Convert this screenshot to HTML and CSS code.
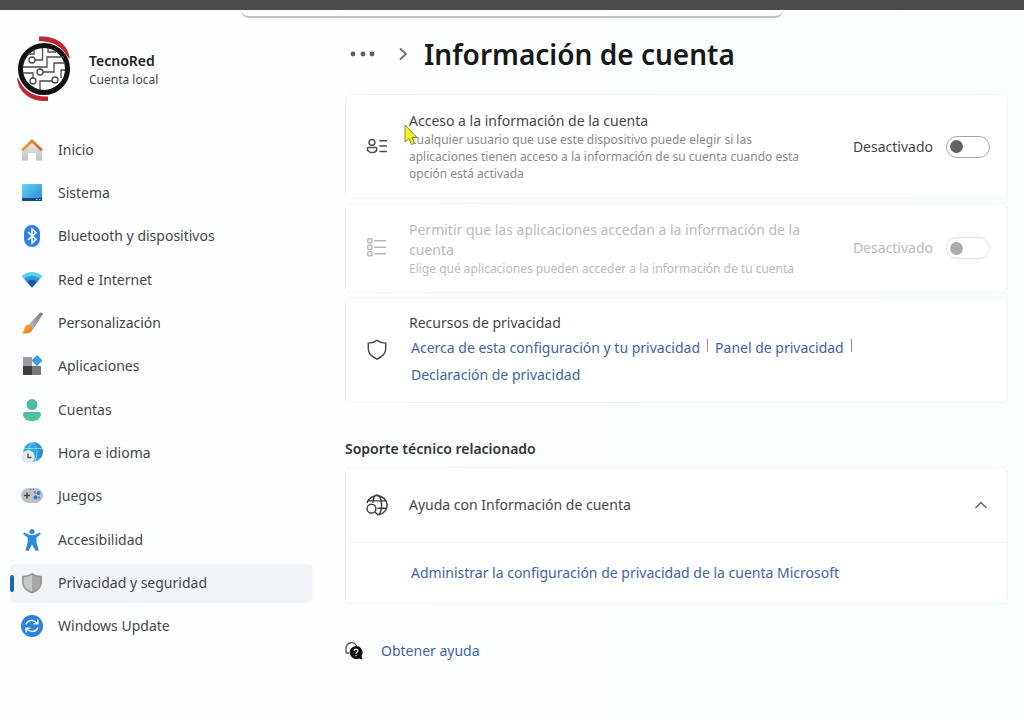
FILE: index.html
```html
<!DOCTYPE html>
<html lang="es">
<head>
    <meta charset="UTF-8">
    <meta name="viewport" content="width=device-width, initial-scale=1.0">
    <title>Información de cuenta</title>
    <link rel="stylesheet" href="styles.css">
</head>
<body>
    <div class="top-bar"><div class="top-tab"></div></div>
    <div class="layout">
        <aside class="sidebar">
            <div class="profile">
                <svg class="avatar" width="56" height="66" viewBox="0 0 56 66">
                    <path d="M23 0.500C40 0 52 8 54 23L51 20C46 11 38 5.500 23 5Z" fill="#bf2730"/>
                    <path d="M32 65C15 66 2 57 1 41L4 46C9 55 17 61 32 60.500Z" fill="#bf2730"/>
                    <circle cx="28" cy="33" r="23.5" fill="#fff" stroke="#111312" stroke-width="5"/>
                    <g fill="none" stroke="#4b4b4b" stroke-width="1.3">
                        <path d="M18.500 24h8V12M7 31h24V21h17M24 36h14v-9h11M7 37h10v5M24 54v-9h12M49 34h-4v8M12 18h6v-5M32 12v4h8"/>
                        <circle cx="16" cy="24" r="3" fill="#fff"/>
                        <circle cx="24" cy="36" r="3" fill="#fff"/>
                        <circle cx="17" cy="45" r="3" fill="#fff"/>
                        <circle cx="39" cy="44" r="3" fill="#fff"/>
                    </g>
                </svg>
                <div>
                    <div class="profile-name">TecnoRed</div>
                    <div class="profile-type">Cuenta local</div>
                </div>
            </div>

            <nav class="menu">
                <a href="#">
                    <svg viewBox="0 0 22 22">
                        <defs>
                            <linearGradient id="wall" x2="0" y2="1"><stop stop-color="#f0f0f0"/><stop offset="1" stop-color="#bfc0c2"/></linearGradient>
                            <linearGradient id="roof"><stop stop-color="#f0a03a"/><stop offset="1" stop-color="#cf6a2b"/></linearGradient>
                        </defs>
                        <path d="M1 10L11 2l10 8v11.5h-6V14H7v7.5H1z" fill="url(#wall)"/>
                        <path d="M1 11.5L11 2l10 9.5" fill="none" stroke="url(#roof)" stroke-width="2.8"/>
                    </svg>
                    Inicio
                </a>
                <a href="#">
                    <svg viewBox="0 0 22 22">
                        <defs><linearGradient id="screen" x2="1" y2="1"><stop stop-color="#62d8f4"/><stop offset="1" stop-color="#2b83d2"/></linearGradient></defs>
                        <rect x="1" y="2" width="20" height="17" rx="1" fill="url(#screen)"/>
                        <path d="M1 16h20v2a1 1 0 0 1-1 1H2a1 1 0 0 1-1-1z" fill="#174a7c"/>
                        <path d="M15 17.5h1.5M18 17.5h1.5" stroke="#8fc8ec"/>
                    </svg>
                    Sistema
                </a>
                <a href="#">
                    <svg viewBox="0 0 22 22">
                        <rect x="3" y="0" width="16" height="22" rx="8" fill="#2f80ea"/>
                        <path d="M7 7l8 7.5-4 3.5V4l4 3.500L7 15" fill="none" stroke="#fff" stroke-width="1.5"/>
                    </svg>
                    Bluetooth y dispositivos
                </a>
                <a href="#">
                    <svg viewBox="0 0 22 22">
                        <path d="M0.5 7Q11-1 21.5 7L11 18.5z" fill="#5fd0f5"/>
                        <path d="M3 9.800Q11 3.500 19 9.800L11 18.500z" fill="#2f98dd"/>
                        <path d="M6 13Q11 8.500 16 13L11 18.500z" fill="#1c58a8"/>
                    </svg>
                    Red e Internet
                </a>
                <a href="#">
                    <svg viewBox="0 0 22 22">
                        <defs>
                            <linearGradient id="handle" x1="1" x2="0" y2="1"><stop stop-color="#777b80"/><stop offset="1" stop-color="#b9bcc0"/></linearGradient>
                            <linearGradient id="brush" x2="1" y2="1"><stop stop-color="#ffb53b"/><stop offset="1" stop-color="#e0701c"/></linearGradient>
                        </defs>
                        <path d="M19 0.800q2.500-1 2.700 1.500L12.500 17l-5-4z" fill="url(#handle)"/>
                        <path d="M7.500 12.500l4.500 3.500c0 4.500-6 6.500-11.500 5 2.500-1 2.300-2.500 3-5 .7-2 2.200-3.500 4-3.500z" fill="url(#brush)"/>
                    </svg>
                    Personalización
                </a>
                <a href="#">
                    <svg viewBox="0 0 22 22">
                        <rect x="2" y="2" width="9" height="9" fill="#9a9da1"/>
                        <rect x="2" y="11" width="9" height="9" fill="#3c3e42"/>
                        <rect x="11" y="11" width="9" height="9" fill="#75787d"/>
                        <path d="M16 0l5.5 5.5L16 11l-5.5-5.5z" fill="#3b9cec"/>
                    </svg>
                    Aplicaciones
                </a>
                <a href="#">
                    <svg viewBox="0 0 22 22">
                        <circle cx="11" cy="5.5" r="5.5" fill="#52bca3"/>
                        <path d="M4 13h14a2 2 0 0 1 2 2c0 4.500-4 7-9 7s-9-2.500-9-7a2 2 0 0 1 2-2z" fill="#4fc0a5"/>
                    </svg>
                    Cuentas
                </a>
                <a href="#">
                    <svg viewBox="0 0 22 22">
                        <circle cx="12" cy="10" r="9.8" fill="#2eaadb"/>
                        <path d="M12 0.2a9.800 9.800 0 0 1 8 15.500q-6 1-6-6T12 0.200z" fill="#2a8fd0"/>
                        <path d="M3 6.500h18M12 0.200q-6 5-4 12M12 0.200q7 8 2 19" stroke="#8be0f2" stroke-width=".8" fill="none"/>
                        <circle cx="7" cy="15" r="6.8" fill="#e6e8ea"/>
                        <path d="M7 11.500v4h3.500" fill="none" stroke="#505459" stroke-width="1.4"/>
                    </svg>
                    Hora e idioma
                </a>
                <a href="#">
                    <svg viewBox="0 0 22 22">
                        <rect x="0" y="3" width="22" height="15" rx="7.5" fill="#bcc0c7"/>
                        <path d="M3 10.500h6M6 7.500v6" stroke="#494c52" stroke-width="1.6"/>
                        <path d="M9 4.500h1M12 4.500h1" stroke="#62666c"/>
                        <circle cx="17.5" cy="8" r="2" fill="#2d7dd2"/>
                        <circle cx="14.5" cy="12.5" r="2" fill="#2d7dd2"/>
                        <circle cx="14" cy="7.5" r="1.2" fill="#8a9098"/>
                        <circle cx="18" cy="12.5" r="1.2" fill="#8a9098"/>
                    </svg>
                    Juegos
                </a>
                <a href="#">
                    <svg viewBox="0 0 22 22">
                        <circle cx="11" cy="2.5" r="2.5" fill="#2887dc"/>
                        <path d="M3 3.500l5.500 2.500h5L19 3.500l.8 1.800-4.300 3.200V13l2.200 8.500-2.900.5L11 15.500l-3.600 6.500-2.900-.5L6.700 13V8.500l-4.500-3.200z" fill="#2b8be0"/>
                    </svg>
                    Accesibilidad
                </a>
                <a href="#" class="active">
                    <svg viewBox="0 0 22 22">
                        <path d="M11 1q4.500 3 10 3v6c0 6-4.500 9.500-10 11.500C5.500 19.500 1 16 1 10V4q5.500 0 10-3z" fill="#96999b"/>
                        <path d="M11 3q4 2.200 8.300 2.500V10c0 4.800-3.500 7.800-8.300 9.600z" fill="#a6a8a9"/>
                        <path d="M11 3q-4 2.200-8.300 2.500V10c0 4.800 3.500 7.800 8.300 9.600z" fill="#c6c8c9"/>
                    </svg>
                    Privacidad y seguridad
                </a>
                <a href="#">
                    <svg viewBox="0 0 22 22">
                        <circle cx="11" cy="11" r="11" fill="#2c82da"/>
                        <path d="M5 9.500q1.500-4 6-4 3 0 5.500 3M17 12.500q-1.500 4-6 4-3 0-5.500-3M16.800 4.500v4.200h-4.200M5.200 17.500v-4.200h4.200" fill="none" stroke="#e4f3ff" stroke-width="1.6"/>
                    </svg>
                    Windows Update
                </a>
            </nav>
        </aside>

        <main class="content">
            <header class="page-header">
                <button type="button" class="more-btn" aria-label="Más">
                    <svg width="26" height="6" viewBox="0 0 26 6" fill="#5b5d5f"><circle cx="3" cy="3" r="2.4"/><circle cx="13" cy="3" r="2.4"/><circle cx="22" cy="3" r="2.4"/></svg>
                </button>
                <svg class="crumb" width="8" height="14" viewBox="0 0 8 14" fill="none" stroke="#66696b" stroke-width="1.7"><path d="M1 1.500L7 7l-6 5.500"/></svg>
                <h1>Información de cuenta</h1>
            </header>

            <section class="card access-card">
                <svg class="card-icon" viewBox="0 0 24 24" fill="none" stroke="#4d4f50" stroke-width="1.6">
                    <circle cx="6.5" cy="7" r="3.2"/>
                    <path d="M2.500 12.500h8.300a1 1 0 0 1 1 1c0 3-2.300 4.500-5.100 4.500s-5.200-1.500-5.200-4.500a1 1 0 0 1 1-1zM14.500 5.200h8.500M14.500 11h8.500M14.500 17h8.500"/>
                </svg>
                <div class="card-text">
                    <label for="account-access">Acceso a la información de la cuenta</label>
                    <p>Cualquier usuario que use este dispositivo puede elegir si las aplicaciones tienen acceso a la información de su cuenta cuando esta opción está activada</p>
                    <svg class="pointer" width="14" height="22" viewBox="0 0 14 22"><path d="M1 1v17l4-3.500 2.500 6 3-1.200L8 13.500h5z" fill="#f7f22c" stroke="#8d8b35"/></svg>
                </div>
                <span class="state">Desactivado</span>
                <input type="checkbox" class="toggle" id="account-access">
            </section>

            <section class="card apps-card disabled">
                <svg class="card-icon" viewBox="0 0 24 24" fill="none" stroke="#b4b6b7" stroke-width="1.6">
                    <rect x="2" y="2" width="4.5" height="4.5" rx="1"/>
                    <rect x="2" y="9" width="4.500" height="4.500" rx="1"/>
                    <rect x="2" y="16" width="4.500" height="4.500" rx="1"/>
                    <path d="M9 4.200h13M9 11.200h13M9 18.200h13"/>
                </svg>
                <div class="card-text">
                    <label for="apps-access">Permitir que las aplicaciones accedan a la información de la cuenta</label>
                    <p>Elige qué aplicaciones pueden acceder a la información de tu cuenta</p>
                </div>
                <span class="state">Desactivado</span>
                <input type="checkbox" class="toggle" id="apps-access" disabled>
            </section>

            <section class="card resources-card">
                <svg class="card-icon" viewBox="0 0 24 24" fill="none" stroke="#454748" stroke-width="1.6">
                    <path d="M12 1.500q4 3 9.500 3v6.500c0 5.500-4 8.500-9.500 11-5.500-2.500-9.500-5.500-9.500-11V4.500Q8 4.500 12 1.500z"/>
                </svg>
                <div class="card-text">
                    <h2>Recursos de privacidad</h2>
                    <div class="links">
                        <a href="#">Acerca de esta configuración y tu privacidad</a>
                        <span class="separator"></span>
                        <a href="#">Panel de privacidad</a>
                        <span class="separator"></span>
                        <a href="#">Declaración de privacidad</a>
                    </div>
                </div>
            </section>

            <h2 class="section-title">Soporte técnico relacionado</h2>

            <section class="help">
                <button type="button" class="help-toggle" aria-expanded="true">
                    <svg class="card-icon" viewBox="0 0 24 24" fill="none" stroke="#3f4142" stroke-width="1.6">
                        <path d="M1.200 10A11 10.500 0 1 1 14.500 22.500M2.500 7.500h19.500M12.500 15.500h9.500M7.500 9.500C8 4.500 9.500 1.200 12 1.200s5 4 5 10.500-2 11-4 11"/>
                        <circle cx="6" cy="16" r="4.8"/>
                        <path d="M9.500 19.500l4 3.500"/>
                    </svg>
                    <span>Ayuda con Información de cuenta</span>
                    <svg class="chevron" width="14" height="8" viewBox="0 0 14 8" fill="none" stroke="#606364" stroke-width="1.4"><path d="M1.500 7L7 1.500 12.500 7"/></svg>
                </button>
                <div class="help-body">
                    <a href="#">Administrar la configuración de privacidad de la cuenta Microsoft</a>
                </div>
            </section>

            <div class="get-help">
                <svg width="18" height="18" viewBox="0 0 18 18">
                    <path d="M1 11V7a5.500 5.500 0 0 1 11-1.500M1 11h3" fill="none" stroke="#555" stroke-width="1.3"/>
                    <path d="M11 4a6.500 6.500 0 0 1 5.500 10l1 3.500-3.800-1A6.500 6.500 0 1 1 11 4z" fill="#0d0e0e"/>
                    <path d="M9 8.800q.3-1.600 2-1.600t2 1.500q0 1-1 1.500t-1 1.500M11 13v1.200" fill="none" stroke="#fff" stroke-width="1.200"/>
                </svg>
                <a href="#">Obtener ayuda</a>
            </div>
        </main>
    </div>
</body>
</html>
```
FILE: styles.css
```css
* {
    box-sizing: border-box;
}
body {
    margin: 0;
    min-height: 100vh;
    font-family: "Noto Sans", "Open Sans", sans-serif;
    font-size: 14px;
    line-height: 20px;
    color: #454647;
    background: linear-gradient(90deg, #fdfefe 30%, #f9fefe 100%);
}
h1, h2, p {
    margin: 0;
}
a {
    color: #3e65a5;
    text-decoration: none;
}
a:hover {
    text-decoration: underline;
}
button {
    padding: 0;
    border: none;
    background: none;
    font: inherit;
    color: inherit;
    cursor: pointer;
}
.top-bar {
    height: 18px;
    border-top: 10px solid #4a4b4a;
}
.top-tab {
    width: 53%;
    height: 8px;
    margin: 0 auto;
    border-bottom: 2px solid #bfc1c1;
    border-radius: 0 0 10px 10px;
}
.layout {
    display: grid;
    grid-template-columns: 303px 1fr;
    gap: 32px;
    padding: 0 16px 0 10px;
}

/* sidebar */
.profile {
    display: flex;
    align-items: center;
    gap: 17px;
    height: 66px;
    margin: 18px 0 28px 6px;
}
.profile-name {
    line-height: 20px;
    font-weight: 600;
    color: #1f2021;
}
.profile-type {
    font-size: 12px;
    line-height: 17px;
}
.menu {
    display: flex;
    flex-direction: column;
    justify-content: space-between;
    height: 516px;
}
.menu a {
    position: relative;
    display: flex;
    align-items: center;
    gap: 15px;
    height: 39px;
    padding-left: 11px;
    border-radius: 5px;
    color: #454647;
}
.menu a:hover {
    text-decoration: none;
    background-color: #f5f7fa;
}
.menu svg {
    width: 22px;
    height: 22px;
}
.menu .active {
    background-color: #f2f5f8;
}
.menu .active::before {
    content: "";
    position: absolute;
    left: 0;
    width: 4px;
    height: 17px;
    border-radius: 2px;
    background-color: #1f63c4;
}

/* content */
.page-header {
    display: flex;
    align-items: center;
    height: 40px;
    margin: 16px 0 20px;
    padding-left: 5px;
}
.more-btn {
    display: flex;
}
.crumb {
    margin: 0 17px 0 23px;
}
h1 {
    font-size: 28px;
    line-height: 40px;
    font-weight: 600;
    color: #161818;
}
.card {
    display: flex;
    align-items: center;
    margin-bottom: 4px;
    padding: 14px 17px 14px 20px;
    border: 1px solid #f0f4f5;
    border-radius: 5px;
    background-color: #fff;
}
.access-card {
    min-height: 105px;
}
.apps-card {
    min-height: 90px;
}
.resources-card {
    min-height: 106px;
}
.card-icon {
    flex: none;
    width: 22px;
    height: 22px;
    margin-right: 21px;
}
.card-text {
    position: relative;
    flex: 1;
    padding-right: 32px;
}
.card-text label {
    display: block;
}
.card-text p {
    font-size: 12px;
    line-height: 17px;
    color: #888a8b;
}
.card h2 {
    font-size: 14px;
    font-weight: 400;
}
.pointer {
    position: absolute;
    left: -5px;
    top: 13px;
}
.state {
    margin-right: 13px;
}
.toggle {
    appearance: none;
    display: flex;
    align-items: center;
    width: 44px;
    height: 22px;
    margin: 0;
    padding: 0 3px;
    border: 1px solid #a5a7a7;
    border-radius: 11px;
    background-color: #fff;
}
.toggle::before {
    content: "";
    width: 13px;
    height: 13px;
    border-radius: 50%;
    background-color: #626463;
}
.toggle:checked {
    justify-content: flex-end;
}
.disabled,
.disabled p {
    color: #b9bbbc;
}
.disabled .toggle {
    border-color: #e2e4e4;
}
.disabled .toggle::before {
    background-color: #abadad;
}
.links {
    display: flex;
    flex-wrap: wrap;
    gap: 0 7px;
    margin-top: 1px;
    padding-left: 2px;
    line-height: 27px;
}
.separator {
    width: 1px;
    height: 13px;
    margin-top: 5px;
    background-color: #8d8f90;
}
.section-title {
    margin: 36px 0 8px;
    font-size: 14px;
    line-height: 20px;
    font-weight: 600;
    color: #323435;
}
.help {
    border: 1px solid #f0f4f5;
    border-radius: 5px;
    background-color: #fff;
}
.help-toggle {
    display: flex;
    align-items: center;
    width: 100%;
    height: 74px;
    padding: 0 19px 0 20px;
}
.chevron {
    margin-left: auto;
}
.help-body {
    padding: 20px 65px;
    border-top: 1px solid #f0f4f5;
}
.get-help {
    display: flex;
    align-items: center;
    gap: 18px;
    margin: 37px 0 20px;
}
```
